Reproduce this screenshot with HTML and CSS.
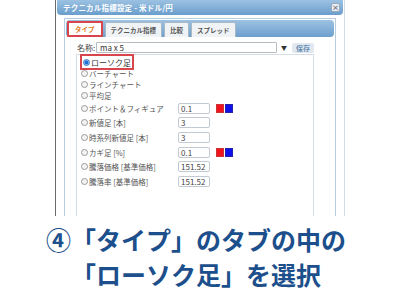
FILE: index.html
```html
<!DOCTYPE html>
<html lang="ja">
<head>
<meta charset="utf-8">
<link rel="stylesheet" href="styles.css">
</head>
<body>
<div class="page">
  <div class="shot">
    <div class="dialog">
      <div class="titlebar">
        <span class="title">テクニカル指標設定 - 米ドル/円</span>
        <span class="close">×</span>
      </div>
      <div class="panel">
        <div class="tabbar">
          <span class="tab active">タイプ</span>
          <span class="tab">テクニカル指標</span>
          <span class="tab">比較</span>
          <span class="tab">スプレッド</span>
        </div>
        <div class="namerow">
          <span class="namelabel">名称:</span>
          <span class="nameinput">ma x 5</span>
          <span class="arrow">▼</span>
          <span class="save">保存</span>
        </div>
        <div class="content">
          <div class="row sel"><span class="radio on"></span><span class="lbl">ローソク足</span></div>
          <div class="row"><span class="radio"></span><span class="lbl">バーチャート</span></div>
          <div class="row"><span class="radio"></span><span class="lbl">ラインチャート</span></div>
          <div class="row"><span class="radio"></span><span class="lbl">平均足</span></div>
          <div class="row tall"><span class="radio"></span><span class="lbl">ポイント＆フィギュア</span><span class="val">0.1</span><span class="sw red"></span><span class="sw blue"></span></div>
          <div class="row tall"><span class="radio"></span><span class="lbl">新値足 [本]</span><span class="val">3</span></div>
          <div class="row tall"><span class="radio"></span><span class="lbl">時系列新値足 [本]</span><span class="val">3</span></div>
          <div class="row tall"><span class="radio"></span><span class="lbl">カギ足 [%]</span><span class="val">0.1</span><span class="sw red"></span><span class="sw blue"></span></div>
          <div class="row tall"><span class="radio"></span><span class="lbl">騰落価格 [基準価格]</span><span class="val">151.52</span></div>
          <div class="row tall"><span class="radio"></span><span class="lbl">騰落率 [基準価格]</span><span class="val">151.52</span></div>
        </div>
      </div>
    </div>
  </div>
  <div class="caption">
    <div class="line">④「タイプ」のタブの中の</div>
    <div class="line">「ローソク足」を選択</div>
  </div>
</div>
</body>
</html>
```

FILE: styles.css
```css
* { box-sizing: border-box; }
html, body { margin: 0; padding: 0; background: #fff; }
body { width: 400px; height: 300px; overflow: hidden; font-family: "Noto Sans CJK JP", "Noto Sans", sans-serif; }
.page { width: 400px; height: 300px; }
.shot {
  margin-left: 55px;
  width: 290px;
  height: 216px;
  border-left: 1px solid #6d6d6d;
  border-right: 1px solid #d4dde6;
  padding: 0 1px;
}
.dialog { height: 100%; display: flex; flex-direction: column; }
.titlebar {
  height: 15px;
  flex: none;
  border-radius: 0 0 4px 4px;
  background: linear-gradient(#9cc2e2, #6a9dcc);
  display: flex;
  align-items: center;
  justify-content: space-between;
  padding: 0 3px 0 6px;
}
.title { color: #fff; font-size: 7.5px; font-weight: bold; letter-spacing: 0.2px; }
.close {
  width: 9px; height: 9px;
  background: #e8eef4;
  border: 1px solid #9ab;
  border-radius: 2px;
  font-size: 7px; line-height: 7px;
  text-align: center;
  color: #667;
  font-weight: bold;
}
.panel {
  flex: 1;
  margin: 3px 7px 0 7px;
  border: 1px solid #b7cde0;
  border-bottom: none;
  padding: 1px 1px 0 1px;
  display: flex;
  flex-direction: column;
}
.tabbar {
  height: 17px;
  flex: none;
  border-radius: 4px;
  background: linear-gradient(#9cc2e2, #6d9fcd);
  display: flex;
  align-items: flex-end;
  gap: 2px;
  padding: 0 0 0 1px;
}
.tab {
  height: 15px;
  padding: 0 5px;
  background: #f0f3f6;
  border: 1px solid #aab8c4;
  border-bottom: none;
  border-radius: 2px 2px 0 0;
  font-size: 6.5px;
  font-weight: bold;
  color: #555;
  display: flex;
  align-items: center;
}
.tab.active {
  height: 16px;
  background: #fff;
  color: #e07a1f;
  border: 2px solid #d9454d;
  border-radius: 1px;
  padding: 0 6px;
}
.namerow {
  display: flex;
  flex: none;
  align-items: center;
  height: 11px;
  margin: 5px 0 0 11px;
  font-size: 8px;
  color: #444;
}
.namelabel { width: 19px; }
.nameinput {
  width: 181px; height: 11px;
  border: 1px solid #b5bcc4;
  border-radius: 1px;
  padding-left: 3px;
  line-height: 9px;
  color: #333;
}
.arrow { font-size: 6px; margin-left: 4px; color: #333; }
.save {
  margin-left: 5px;
  height: 10px;
  padding: 0 4px;
  background: #e1e8ef;
  border-radius: 2px;
  color: #6a8fb5;
  font-size: 7px;
  font-weight: bold;
  line-height: 10px;
}
.content {
  flex: 1;
  margin: 1px 20px 0 10px;
  border: 1px solid #d5dce3;
  border-bottom: none;
  padding: 0 0 0 4px;
}
.row {
  display: flex;
  align-items: center;
  height: 11px;
  font-size: 7.5px;
  color: #555;
}
.row.tall { height: 14.6px; }
.row.sel {
  width: 54px;
  height: 16px;
  border: 2px solid #d9454d;
  padding-left: 1px;
  margin-left: -1px;
  margin-top: -1px;
  margin-bottom: -2px;
  color: #333;
  font-size: 8px;
}
.radio {
  width: 7px; height: 7px;
  border: 1px solid #999;
  border-radius: 50%;
  margin-right: 1px;
  flex: none;
  background: #f4f4f4;
}
.radio.on { border-color: #3a79c9; background: radial-gradient(circle, #1f6fd6 50%, #9cc0ec 60%); }
.lbl { width: 89px; flex: none; white-space: nowrap; }
.val {
  width: 32px; height: 11px;
  border: 1px solid #c1cad2;
  border-radius: 2px;
  padding-left: 2px;
  font-size: 8px;
  line-height: 9px;
  color: #444;
  flex: none;
}
.sw { width: 8px; height: 9px; flex: none; }
.sw.red { background: #f0141e; margin-left: 6px; border: 1px solid #c33; }
.sw.blue { background: #1010e8; margin-left: 1px; border: 1px solid #22a; }
.caption {
  margin-top: 6px;
  padding-right: 8px;
  text-align: center;
  font-size: 25px;
  font-weight: bold;
  color: #1c4f8c;
  line-height: 35px;
}
.caption .line { white-space: nowrap; }
```
